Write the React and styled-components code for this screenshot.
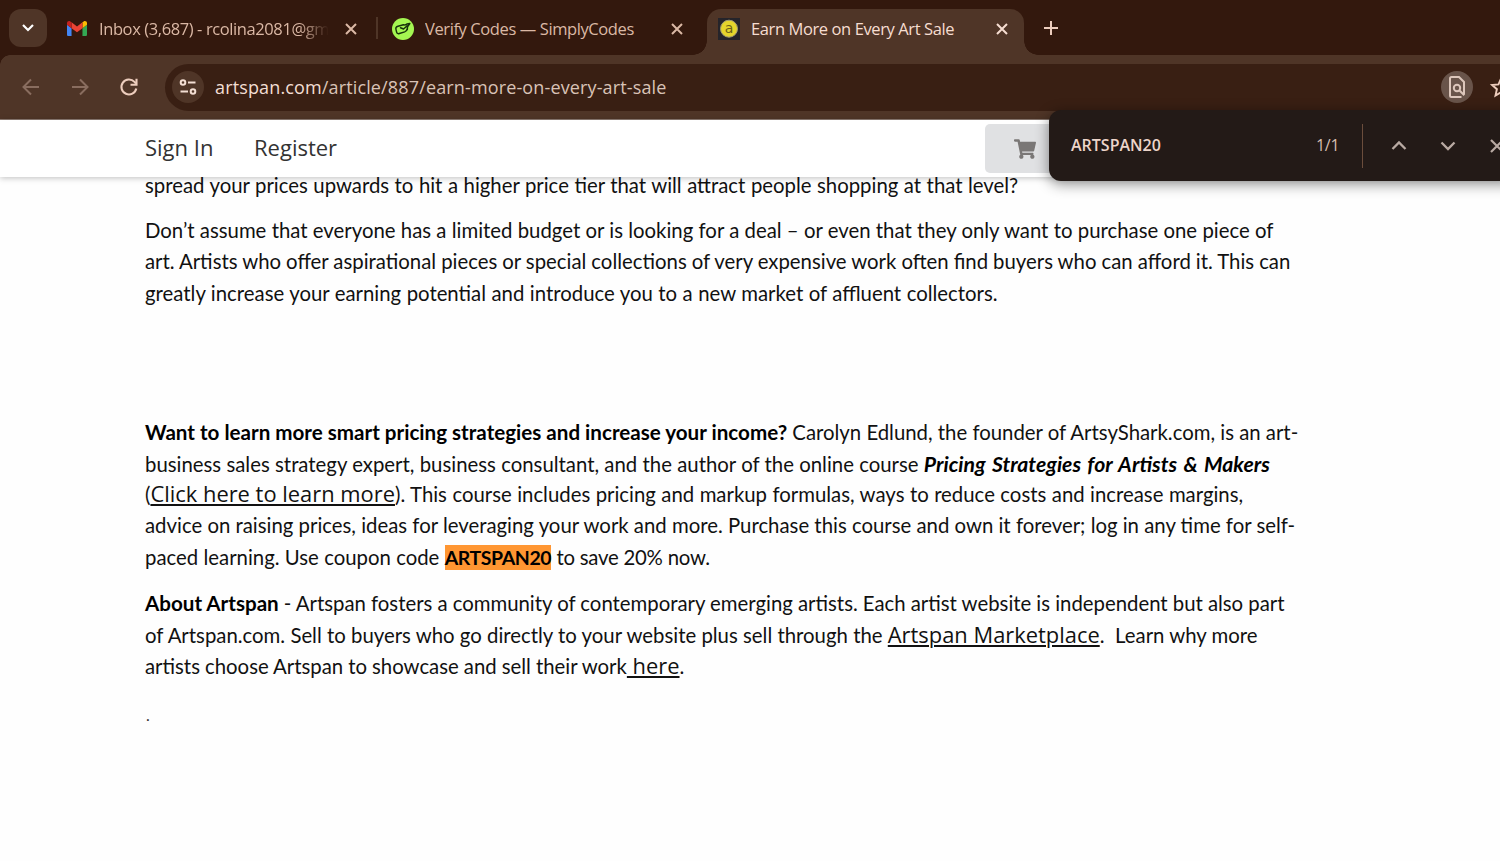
import React from 'react'
import styled, { createGlobalStyle } from 'styled-components'
import { FaShoppingCart } from 'react-icons/fa'

const GlobalStyle = createGlobalStyle`
  * {
    box-sizing: border-box;
  }
  body {
    margin: 0;
    background: #fff;
    overflow: hidden;
  }
`;

const Window = styled.div`
  position: relative;
  width: 1500px;
  height: 861px;
  overflow: hidden;
  display: flex;
  flex-direction: column;
  background: #fefefe;
  font-family: 'Open Sans', sans-serif;
`;

const TabStrip = styled.div`
  flex: none;
  height: 55px;
  padding: 9px 0 0 9px;
  display: flex;
  align-items: flex-start;
  background: #33180d;
`;

const TabSearch = styled.div`
  width: 38px;
  height: 38px;
  border-radius: 12px;
  background: #4f3527;
  display: flex;
  align-items: center;
  justify-content: center;
`;

const Tab = styled.div`
  position: relative;
  width: ${({ $width }) => $width}px;
  height: 46px;
  padding: 0 ${({ $right }) => $right || 11}px 7px ${({ $left }) => $left || 11}px;
  display: flex;
  align-items: center;
  color: ${({ $active }) => ($active ? '#f6ddd1' : '#dbb8a5')};
  background: ${({ $active }) => ($active ? '#4f3527' : 'transparent')};
  border-radius: 14px 14px 0 0;

  /* curved feet of the selected tab */
  &::before,
  &::after {
    content: '';
    display: ${({ $active }) => ($active ? 'block' : 'none')};
    position: absolute;
    bottom: 0;
    width: 14px;
    height: 14px;
  }
  &::before {
    left: -14px;
    background: radial-gradient(circle at 0 0, transparent 13.5px, #4f3527 14px);
  }
  &::after {
    right: -14px;
    background: radial-gradient(circle at 100% 0, transparent 13.5px, #4f3527 14px);
  }
`;

const TabIcon = styled.div`
  flex: none;
  width: 22px;
  height: 22px;
  display: flex;
  align-items: center;
  justify-content: center;
`;

const TabTitle = styled.div`
  flex: 1;
  margin-left: 11px;
  overflow: hidden;
  white-space: nowrap;
  font-size: 16.5px;
  line-height: 24px;
  letter-spacing: -0.4px;
  ${({ $fade }) => $fade && `
    mask-image: linear-gradient(90deg, #000 86%, transparent 99%);
  `}
`;

const TabClose = styled.div`
  flex: none;
  width: 22px;
  height: 22px;
  margin-left: 9px;
  display: flex;
  align-items: center;
  justify-content: center;
`;

const TabDivider = styled.div`
  width: 2px;
  height: 22px;
  margin: 8px 3px 0;
  background: #4f3527;
`;

const NewTab = styled.div`
  margin-left: 16px;
  width: 22px;
  height: 38px;
  display: flex;
  align-items: center;
`;

const Toolbar = styled.div`
  flex: none;
  height: 65px;
  padding-left: 20px;
  display: flex;
  align-items: center;
  background: radial-gradient(circle at 10px 10px, #4f3527 9.5px, #33180d 10px) 0 0 / 10px 10px no-repeat, #4f3527;
  border-bottom: 1px solid #8d7b72;
`;

const NavButton = styled.div`
  width: 22px;
  height: 22px;
  margin-right: 27px;
  color: ${({ $off }) => ($off ? '#896d5f' : '#edcdbd')};
  svg {
    display: block;
  }
`;

const Omnibox = styled.div`
  flex: none;
  width: 1380px;
  height: 47px;
  margin-left: -2px;
  padding-left: 7px;
  display: flex;
  align-items: center;
  border-radius: 24px;
  background: #391f13;
`;

const RoundChip = styled.div`
  flex: none;
  width: 32px;
  height: 32px;
  border-radius: 50%;
  display: flex;
  align-items: center;
  justify-content: center;
  background: ${({ $bg }) => $bg};
`;

const Url = styled.div`
  width: 1237px;
  padding-left: 11px;
  color: #d9c3b7;
  font-size: 18px;
  letter-spacing: 0.14px;
  b {
    font-weight: 400;
    color: #f3ded3;
  }
`;

const StarSlot = styled.div`
  margin-left: 16px;
  height: 24px;
`;

const FindBar = styled.div`
  position: absolute;
  z-index: 3;
  left: 1049px;
  top: 110px;
  width: 480px;
  height: 71px;
  padding-left: 22px;
  display: flex;
  align-items: center;
  border-radius: 12px;
  background: #231a17;
  color: #edd5ca;
  box-shadow: 0 3px 14px rgba(0, 0, 0, 0.45);
`;

const Query = styled.div`
  flex: none;
  width: 245px;
  font-size: 16px;
  font-weight: 600;
  line-height: 22px;
  padding-bottom: 2px;
`;

const MatchCount = styled.div`
  flex: none;
  width: 46px;
  font-size: 16px;
  line-height: 22px;
  letter-spacing: -0.3px;
  padding-bottom: 1px;
  color: #d5beb0;
`;

const FindDivider = styled.div`
  flex: none;
  width: 1px;
  height: 44px;
  margin-right: 26px;
  background: #6b4d3c;
`;

const FindButton = styled.div`
  flex: none;
  width: 20px;
  height: 20px;
  margin-right: 29px;
`;

const SiteHeader = styled.header`
  position: relative;
  z-index: 1;
  flex: none;
  height: 57px;
  padding-left: 145px;
  display: flex;
  align-items: center;
  background: #fff;
  box-shadow: 0 1px 6px rgba(0, 0, 0, 0.25);
`;

const HeaderLink = styled.a`
  width: ${({ $width }) => $width}px;
  padding-bottom: 3px;
  font-size: 22px;
  line-height: 30px;
  color: #333;
`;

const CartButton = styled.div`
  width: 90px;
  height: 49px;
  padding-left: 29px;
  display: flex;
  align-items: center;
  border-radius: 5px;
  background: #e0e1e3;
  color: #7a7776;
`;

const Article = styled.article`
  margin-top: -7.5px;
  padding-left: 145px;
  color: #111;
  font-family: Lato, sans-serif;
  font-size: 20.35px;
`;

const Paragraph = styled.div`
  margin-bottom: ${({ $after }) => $after}px;
`;

const Line = styled.div`
  height: ${({ $height }) => $height || 31.5}px;
  line-height: 31.5px;
  white-space: pre;
  word-spacing: ${({ $space }) => $space || 0}px;
`;

const Dot = styled(Line)`
  padding-left: 1px;
  font-size: 16px;
  line-height: 35px;
  color: #333;
`;

const Strong = styled.strong`
  font-size: 20.6px;
  line-height: 0;
  color: #000;
`;

const CourseTitle = styled.em`
  font-size: 21.2px;
  font-weight: 700;
  line-height: 0;
  letter-spacing: 0.01px;
  font-feature-settings: 'liga' 1;
  word-spacing: 1.7px;
  color: #000;
`;

const TextLink = styled.a`
  font-family: 'Open Sans', sans-serif;
  font-size: 21.9px;
  line-height: 0;
  word-spacing: 0;
  text-decoration: underline;
  text-decoration-thickness: 1.5px;
  text-underline-offset: 2px;
`;

const Match = styled.mark`
  padding: 1px 0;
  background: #ff9632;
  color: #000;
  font-size: 19.5px;
  font-weight: 700;
  letter-spacing: -0.43px;
`;

const Tight = styled.span`
  letter-spacing: -0.25px;
`;

const Cross = () => (
  <svg width="12" height="12" viewBox="0 0 12 12" fill="none" stroke="currentColor" strokeWidth="2">
    <path d="M1 1l10 10M11 1L1 11" />
  </svg>
);

const Chevron = ({ up }) => (
  <svg width="20" height="20" viewBox="0 0 20 20" fill="none" stroke="#b9aaa3" strokeWidth="2.3">
    <path d={up ? 'M3.5 13L10 6.5l6.500 6.500' : 'M3.5 6.500L10 13l6.500-6.500'} />
  </svg>
);

const GmailLogo = () => (
  <svg width="20" height="15" viewBox="52 42 88 66">
    <path fill="#4285f4" d="M58 108h14V74L52 59v43c0 3.3 2.7 6 6 6" />
    <path fill="#34a853" d="M120 108h14c3.3 0 6-2.7 6-6V59l-20 15" />
    <path fill="#fbbc04" d="M120 48v26l20-15v-8c0-7.4-8.5-11.6-14.4-7.2" />
    <path fill="#ea4335" d="M72 74V48l24 18 24-18v26L96 92" />
    <path fill="#c5221f" d="M52 51v8l20 15V48l-5.6-4.2C60.5 39.4 52 43.6 52 51" />
  </svg>
);

const SimplyCodesLogo = () => (
  <svg width="22" height="22" viewBox="0 0 22 22" fill="none" stroke="#17330b" strokeLinecap="round" strokeLinejoin="round">
    <circle cx="11" cy="11" r="11" fill="#a4f651" stroke="none" />
    <path strokeWidth="1.4" d="M11.500 6.700L6 8.200c-1.800.5-2.500 1.400-2.100 3l.7 2.800c.4 1.500 1.300 2 2.800 1.500l5.300-1.600c1.500-.5 2.200-1.300 2.500-2.700" />
    <path strokeWidth="1.5" d="M8.500 9.800l3 1.200 3.700-3.300M11.500 6.700c1.500.8 2.300.2 3.300-.6l3-.6-2.300 3.400-.2 2.500" />
  </svg>
);

const ArtspanLogo = () => (
  <svg width="22" height="22" viewBox="0 0 22 22">
    <rect width="22" height="22" fill="#25242a" />
    <circle cx="11" cy="10.700" r="8.500" fill="#e5d52c" stroke="#a39d70" strokeWidth="1" />
    <text x="11" y="15" textAnchor="middle" fontFamily="DejaVu Sans" fontSize="14" fill="#6b6219">a</text>
  </svg>
);

const App = () => {
  return (
    <Window>
      <GlobalStyle />

      <TabStrip>
        <TabSearch>
          <svg width="14" height="10" viewBox="0 0 14 10" fill="none" stroke="#fff" strokeWidth="2.2">
            <path d="M2 2l5 5 5-5" />
          </svg>
        </TabSearch>
        <Tab $width={326} $left={19}>
          <TabIcon><GmailLogo /></TabIcon>
          <TabTitle $fade>Inbox (3,687) - rcolina2081@gm</TabTitle>
          <TabClose><Cross /></TabClose>
        </Tab>
        <TabDivider />
        <Tab $width={326} $right={19}>
          <TabIcon><SimplyCodesLogo /></TabIcon>
          <TabTitle>Verify Codes — SimplyCodes</TabTitle>
          <TabClose><Cross /></TabClose>
        </Tab>
        <Tab $width={317} $active>
          <TabIcon><ArtspanLogo /></TabIcon>
          <TabTitle>Earn More on Every Art Sale</TabTitle>
          <TabClose><Cross /></TabClose>
        </Tab>
        <NewTab>
          <svg width="22" height="22" viewBox="0 0 22 22" stroke="#edcdbd" strokeWidth="2">
            <path d="M11 4v14M4 11h14" />
          </svg>
        </NewTab>
      </TabStrip>

      <Toolbar>
        <NavButton $off>
          <svg width="22" height="22" viewBox="0 0 22 22" fill="none" stroke="currentColor" strokeWidth="2">
            <path d="M19 11H4M11 3.5L3.5 11l7.500 7.500" />
          </svg>
        </NavButton>
        <NavButton $off>
          <svg width="22" height="22" viewBox="0 0 22 22" fill="none" stroke="currentColor" strokeWidth="2">
            <path d="M3 11h15M11 3.5l7.500 7.500-7.500 7.500" />
          </svg>
        </NavButton>
        <NavButton>
          <svg width="22" height="22" viewBox="0 0 22 22" fill="none" stroke="currentColor" strokeWidth="2.1">
            <path d="M18.300 12.500a7.500 7.500 0 1 1-1.800-6.600L18 7.500" />
            <path d="M18.500 2.800v6h-6" />
          </svg>
        </NavButton>
        <Omnibox>
          <RoundChip $bg="#4f3527">
            <svg width="20" height="20" viewBox="0 0 20 20" fill="none" stroke="#f3ded3" strokeWidth="2">
              <circle cx="5" cy="5.500" r="2.300" />
              <circle cx="15" cy="14.500" r="2.300" />
              <path d="M10 5.500h7.500M2.500 14.500H10" />
            </svg>
          </RoundChip>
          <Url><b>artspan.com</b>/article/887/earn-more-on-every-art-sale</Url>
          <RoundChip $bg="#69544a">
            <svg width="20" height="24" viewBox="0 0 20 24" fill="none" stroke="#dcc6bb" strokeWidth="2">
              <path d="M14.500 22H4.500A1.500 1.500 0 0 1 3 20.500v-17A1.500 1.500 0 0 1 4.500 2H12l5 5v12.500" />
              <circle cx="10" cy="13" r="3.200" />
              <path d="M12.300 15.300l5 5" />
            </svg>
          </RoundChip>
          <StarSlot>
            <svg width="24" height="24" viewBox="0 0 24 24" fill="none" stroke="#edcdbd" strokeWidth="1.9">
              <path d="M12 3.500l2.500 5.900 6.400.6-4.800 4.200 1.400 6.300-5.500-3.300-5.500 3.300 1.400-6.300L3.100 10l6.400-.6z" />
            </svg>
          </StarSlot>
        </Omnibox>
      </Toolbar>

      <FindBar>
        <Query>ARTSPAN20</Query>
        <MatchCount>1/1</MatchCount>
        <FindDivider />
        <FindButton><Chevron up /></FindButton>
        <FindButton><Chevron /></FindButton>
        <FindButton>
          <svg width="20" height="20" viewBox="0 0 20 20" stroke="#b9aaa3" strokeWidth="2.2">
            <path d="M4 4l12 12M16 4L4 16" />
          </svg>
        </FindButton>
      </FindBar>

      <SiteHeader>
        <HeaderLink $width={109}>Sign In</HeaderLink>
        <HeaderLink $width={731}>Register</HeaderLink>
        <CartButton><FaShoppingCart size={22} /></CartButton>
      </SiteHeader>

      <Article>
        <Paragraph $after={13.5}>
          <Line $space={0.3}>spread your prices upwards to hit a higher price tier that will attract people shopping at that level?</Line>
        </Paragraph>
        <Paragraph $after={108}>
          <Line $space={0.07}>Don’t assume that everyone has a limited budget or is looking for a deal – or even that they only want to purchase one piece of</Line>
          <Line $space={-0.17}>art. Artists who offer aspirational pieces or special collections of very expensive work often find buyers who can afford it. This can</Line>
          <Line $space={0.28}>greatly increase your earning potential and introduce you to a new market of affluent collectors.</Line>
        </Paragraph>
        <Paragraph $after={15}>
          <Line><Strong>Want to learn more smart pricing strategies and increase your income?</Strong> Carolyn Edlund, the founder of ArtsyShark.com, is an art-</Line>
          <Line $height={30} $space={0.1}>business sales strategy expert, business consultant, and the author of the online course <CourseTitle>Pricing Strategies for Artists &amp; Makers</CourseTitle></Line>
          <Line $space={0.25}>(<TextLink>Click here to learn more</TextLink>). This course includes pricing and markup formulas, ways to reduce costs and increase margins,</Line>
          <Line $space={0.02}>advice on raising prices, ideas for leveraging your work and more. Purchase this course and own it forever; log in any time for self-</Line>
          <Line $space={0.1}>paced learning. Use coupon code <Match>ARTSPAN20</Match> <Tight>to save 20% now.</Tight></Line>
        </Paragraph>
        <Paragraph $after={14}>
          <Line $space={-0.1}><Strong>About Artspan</Strong> - Artspan fosters a community of contemporary emerging artists. Each artist website is independent but also part</Line>
          <Line $space={0.05}>of Artspan.com. Sell to buyers who go directly to your website plus sell through the <TextLink>Artspan Marketplace</TextLink>.{'\u00a0 '}Learn why more</Line>
          <Line $space={-0.17}>artists choose Artspan to showcase and sell their work<TextLink> here</TextLink>.</Line>
        </Paragraph>
        <Dot>.</Dot>
      </Article>
    </Window>
  )
};

export default App
